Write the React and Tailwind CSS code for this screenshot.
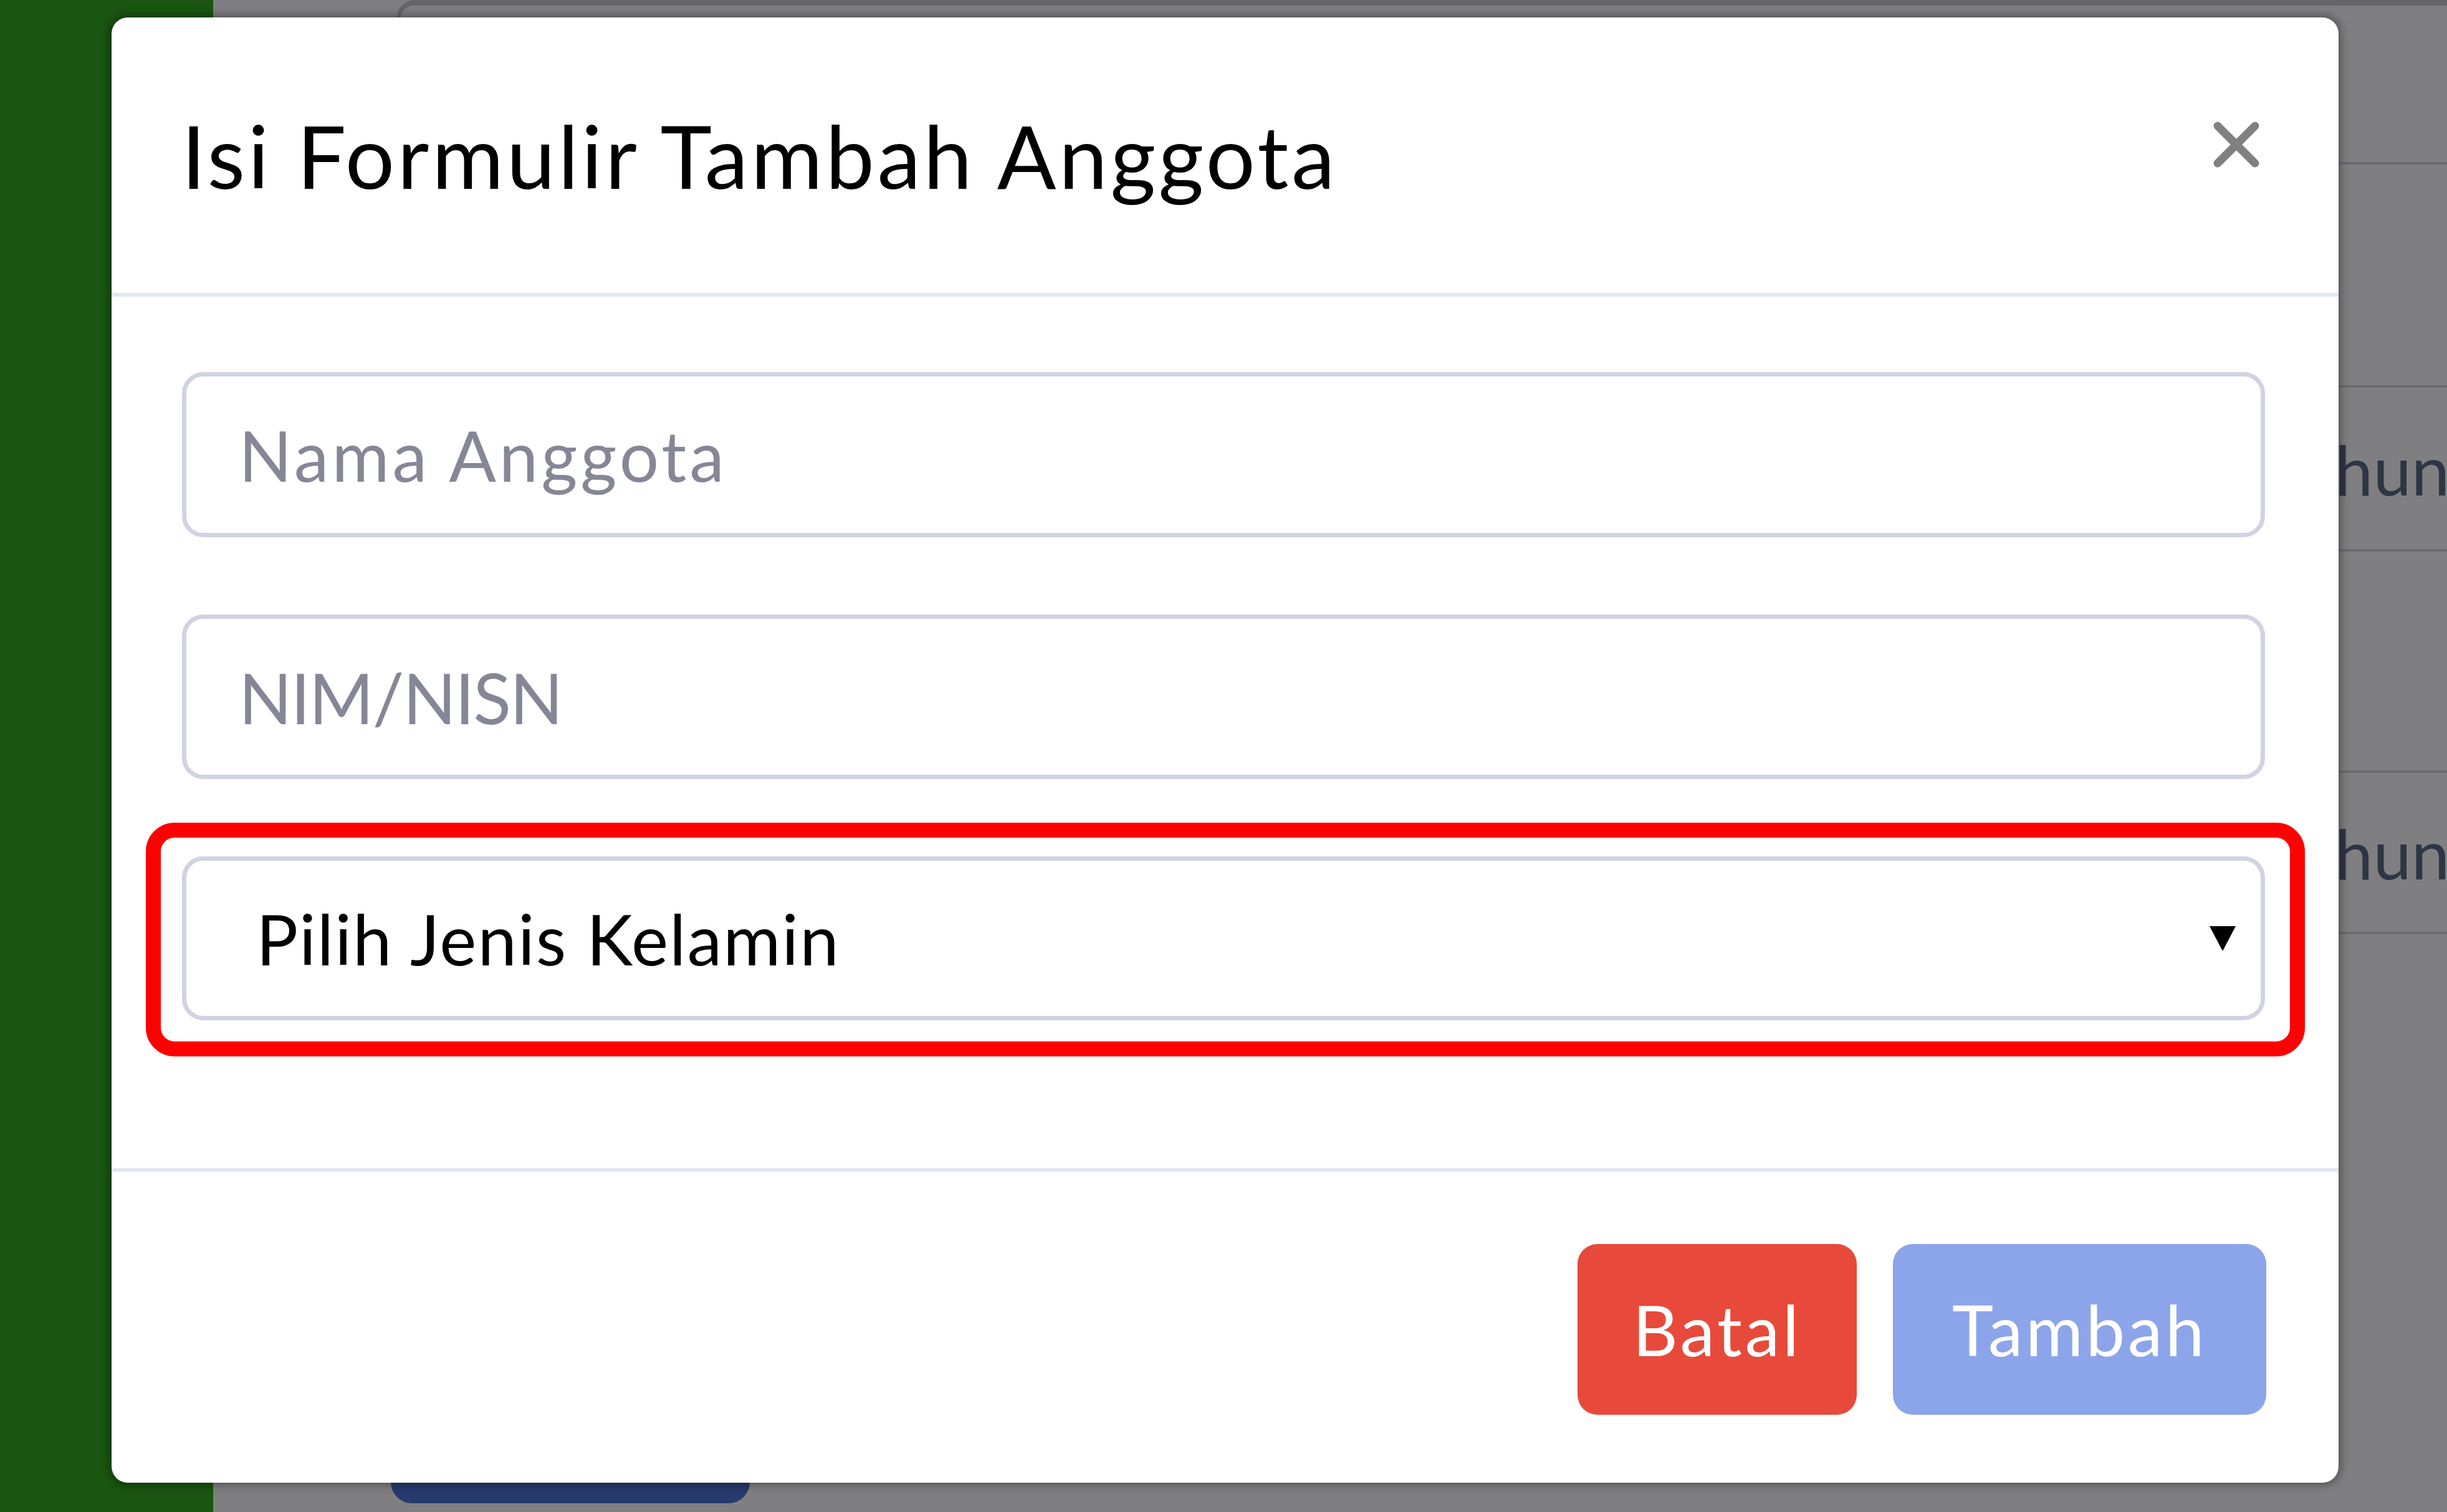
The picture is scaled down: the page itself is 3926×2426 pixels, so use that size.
import React from "react";

function CloseIcon() {
  return (
    <svg width="76" height="76" viewBox="0 0 76 76" fill="none">
      <path
        d="M8 8 L68 68 M68 8 L8 68"
        stroke="#808080"
        strokeWidth="13"
        strokeLinecap="round"
      />
    </svg>
  );
}

function CaretDown() {
  return (
    <svg width="44" height="42" viewBox="0 0 44 42">
      <path d="M1 1 H43 L22 41 Z" fill="#000" />
    </svg>
  );
}

// page behind the dimmed backdrop
function BackgroundPage() {
  const rows = [255, 358, 263, 355, 259];
  return (
    <div className="flex h-full w-full">
      <aside className="w-[342px] shrink-0 bg-[#1a5511]" />
      <main className="flex flex-1 flex-col pl-[285px] bg-[#7f7f81]">
        <div className="ml-[10px] h-[2290px] rounded-tl-[28px] border-l-[6px] border-t-[9px] border-[#65666c]">
          {rows.map((h, i) => (
            <div
              key={i}
              className="flex items-center border-b-[4px] border-[#6b6c72]"
              style={{ height: h }}
            >
              {(i === 2 || i === 4) && (
                <span className="pl-[2996px] text-[110px] leading-none text-[#2e3544]">
                  Tahun
                </span>
              )}
            </div>
          ))}
        </div>
        <div className="mt-auto mb-[14px] h-[100px] w-[576px] rounded-b-[34px] bg-[#273a6e]" />
      </main>
    </div>
  );
}

export default function App() {
  return (
    <div className="relative h-[2426px] w-[3926px] overflow-hidden font-[Lato,sans-serif]">
      <BackgroundPage />

      {/* modal */}
      <div className="absolute inset-0 pl-[179px] pt-[28px]">
        <div className="flex w-[3573px] flex-col rounded-[26px] bg-white shadow-[0_0_14px_4px_rgba(0,0,0,0.35)]">
          <div className="flex h-[448px] items-center justify-between border-b-[6px] border-[#e3e6f0] pl-[112px] pr-[126px]">
            <h5 className="text-[140px] font-normal leading-none tracking-[4.5px] text-black">
              Isi Formulir Tambah Anggota
            </h5>
            <button type="button" className="mb-[34px] flex items-center">
              <CloseIcon />
            </button>
          </div>

          <div className="flex flex-col gap-[124px] pb-[237px] pl-[113px] pr-[118px] pt-[121px]">
            <input
              type="text"
              placeholder="Nama Anggota"
              className="h-[265px] w-full rounded-[34px] border-[7px] border-[#d1d3e2] bg-white pl-[84px] text-[112px] tracking-[5px] text-black outline-none placeholder:text-[#858796]"
            />
            <input
              type="text"
              placeholder="NIM/NISN"
              className="h-[264px] w-full rounded-[34px] border-[7px] border-[#d1d3e2] bg-white pl-[84px] text-[112px] tracking-[-2px] text-black outline-none placeholder:text-[#858796]"
            />
            <div className="relative">
              <div className="flex h-[263px] items-center justify-between rounded-[34px] border-[7px] border-[#d1d3e2] bg-white pl-[112px] pr-[39px]">
                <span className="text-[112px] leading-none tracking-[2px] text-black">
                  Pilih Jenis Kelamin
                </span>
                <CaretDown />
              </div>
              {/* red highlight annotation */}
              <div className="pointer-events-none absolute -bottom-[58px] -left-[58px] -right-[64px] -top-[54px] rounded-[46px] border-[24px] border-[#ff0000]" />
            </div>
          </div>

          <div className="flex justify-end gap-[58px] border-t-[6px] border-[#e3e6f0] pb-[109px] pr-[116px] pt-[116px]">
            <button
              type="button"
              className="flex h-[274px] w-[448px] items-center justify-center rounded-[32px] bg-[#e74a3b] text-[112px] leading-none tracking-[4.5px] text-white"
            >
              Batal
            </button>
            <button
              type="button"
              disabled
              className="flex h-[274px] w-[599px] items-center justify-center rounded-[32px] bg-[#8ca4ea] text-[112px] leading-none tracking-[4.5px] text-white"
            >
              Tambah
            </button>
          </div>
        </div>
      </div>
    </div>
  );
}
